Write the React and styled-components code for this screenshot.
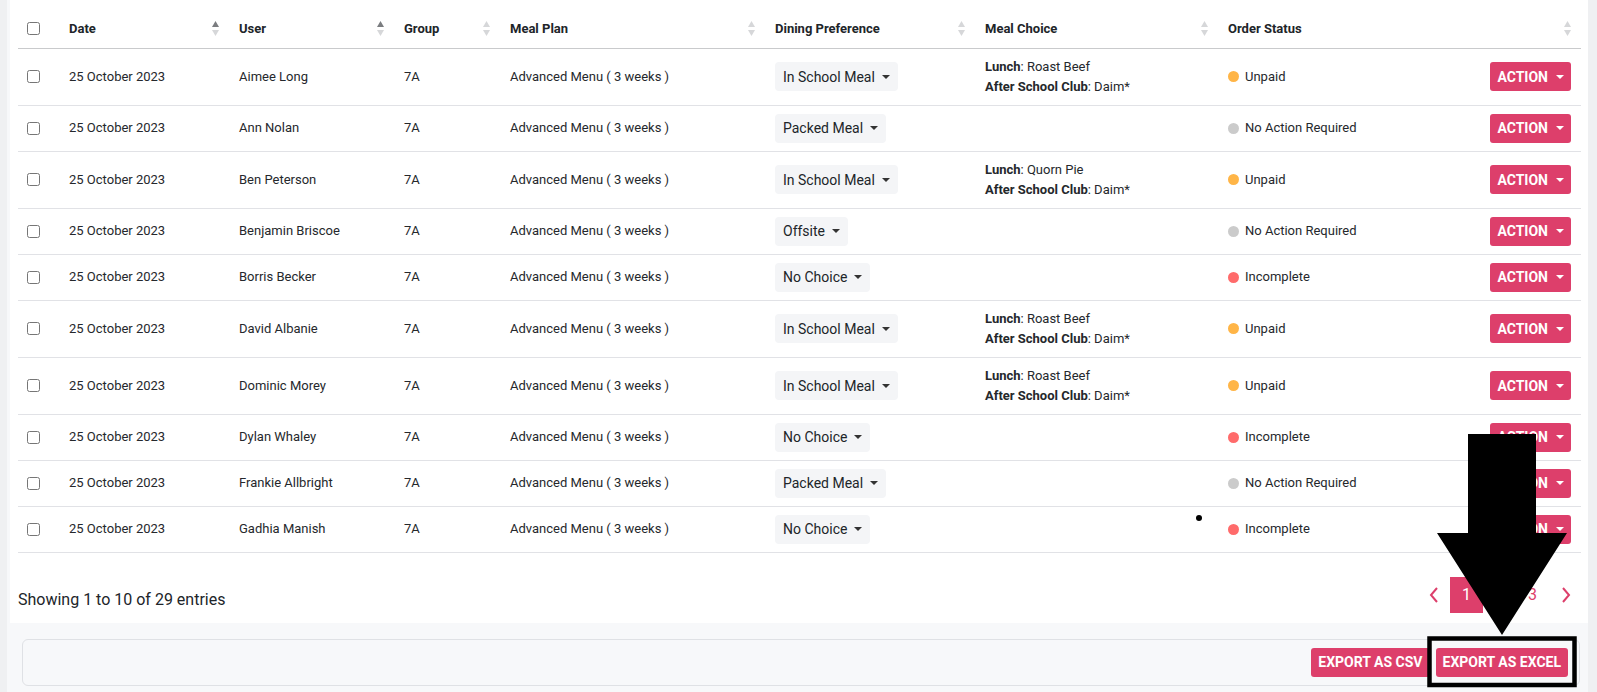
import React from "react";
import styled, { createGlobalStyle } from "styled-components";

const PINK = "#dd3f6b";

const Global = createGlobalStyle`
  html, body { margin: 0; padding: 0; }
  body {
    background: #f7f8fa;
    font-family: Roboto, "Liberation Sans", Arial, sans-serif;
    color: #212529;
  }
  * { box-sizing: border-box; }
`;

const Page = styled.div`
  position: relative;
  display: flex;
  width: 1597px;
  min-height: 692px;
  overflow: hidden;
`;

const Rail = styled.div`
  flex: 0 0 ${(p) => p.$w}px;
  background: #eff0f2;
`;

const Content = styled.div`
  flex: 1;
  background: #f7f8fa;
  padding-left: 3px;
  display: flex;
  flex-direction: column;
`;

const Card = styled.div`
  background: #fff;
  padding: 10px 7px 10px 8px;
`;

const Table = styled.table`
  width: 100%;
  border-collapse: collapse;
  table-layout: fixed;
  font-size: 13px;
`;

const Th = styled.th`
  text-align: left;
  font-weight: 700;
  font-size: 13px;
  color: #212529;
  padding: 0 10px 0 ${(p) => (p.$first ? 9 : 10)}px;
  height: 38px;
  border-bottom: 1px solid #c9cacc;
  vertical-align: middle;
`;

const ThInner = styled.div`
  display: flex;
  align-items: center;
  justify-content: space-between;
`;

const Td = styled.td`
  padding: 8px 10px 8px ${(p) => (p.$first ? 9 : 10)}px;
  border-bottom: 1px solid #e1e2e6;
  vertical-align: middle;
  color: #25282c;
  text-align: ${(p) => (p.$right ? "right" : "left")};
  line-height: 20px;
`;

const Check = styled.input.attrs({ type: "checkbox" })`
  appearance: none;
  -webkit-appearance: none;
  width: 13px;
  height: 13px;
  margin: 0;
  border: 1px solid #767676;
  border-radius: 2.5px;
  background: #fff;
  display: block;
`;

const Select = styled.button`
  display: inline-flex;
  align-items: center;
  gap: 7px;
  height: 29px;
  padding: 0 8px 0 8px;
  border: none;
  border-radius: 4px;
  background: #f4f5f7;
  font-family: inherit;
  font-size: 14px;
  color: #212529;
`;

const Caret = styled.span`
  width: 0;
  height: 0;
  border-left: 4px solid transparent;
  border-right: 4px solid transparent;
  border-top: 4px solid ${(p) => p.$color || "#333"};
  display: inline-block;
`;

const MealLine = styled.div`
  font-size: 13px;
  line-height: 20px;
  white-space: nowrap;
  b { font-weight: 700; }
`;

const Status = styled.div`
  display: flex;
  align-items: center;
  gap: 6px;
  font-size: 13px;
  white-space: nowrap;
`;

const Dot = styled.span`
  width: 11px;
  height: 11px;
  border-radius: 50%;
  background: ${(p) => p.$color};
  flex: 0 0 11px;
`;

const PinkButton = styled.button`
  display: inline-flex;
  align-items: center;
  gap: 8px;
  height: 29px;
  padding: 0 ${(p) => (p.$caret ? 7 : 7)}px 0 ${(p) => (p.$caret ? 7 : 7)}px;
  border: none;
  border-radius: 3px;
  background: ${PINK};
  color: #fff;
  font-family: inherit;
  font-weight: 700;
  font-size: 14px;
  text-transform: uppercase;
  letter-spacing: 0;
`;

const Bottom = styled.div`
  display: flex;
  align-items: center;
  justify-content: space-between;
  margin-top: 24px;
`;

const Info = styled.div`
  font-size: 16px;
  color: #212529;
  margin-top: 10px;
`;

const Pager = styled.div`
  display: flex;
  align-items: center;
  margin-right: -1px;
`;

const PageItem = styled.div`
  width: 33px;
  height: 36px;
  display: flex;
  align-items: center;
  justify-content: center;
  font-size: 16px;
  color: ${(p) => (p.$active ? "#fff" : PINK)};
  background: ${(p) => (p.$active ? PINK : "transparent")};
`;

const Footer = styled.div`
  margin: 16px 8px 0 12px;
  height: 47px;
  border: 1px solid #dfe1e5;
  border-radius: 6px;
  background: #f7f8fa;
  display: flex;
  align-items: center;
  justify-content: flex-end;
  gap: 6px;
  padding-right: 11px;
`;

const Overlay = styled.svg`
  position: absolute;
  left: 0;
  top: 0;
  pointer-events: none;
`;

const SortIcon = ({ active }) => (
  <svg width="7" height="15" viewBox="0 0 7 15">
    <polygon points="0,6 3.5,0 7,6" fill={active ? "#7b7d80" : "#d6d7d9"} />
    <polygon points="0,9 3.5,15 7,9" fill="#d6d7d9" />
  </svg>
);

const Chevron = ({ dir }) => (
  <svg width="10" height="16" viewBox="0 0 10 16">
    <polyline
      points={dir === "left" ? "8,1 2,8 8,15" : "2,1 8,8 2,15"}
      fill="none"
      stroke={PINK}
      strokeWidth="2"
    />
  </svg>
);

const STATUS = {
  Unpaid: "#ffb547",
  "No Action Required": "#cbcbcb",
  Incomplete: "#ff6b6b",
};

const rows = [
  ["Aimee Long", "In School Meal", "Roast Beef", "Unpaid"],
  ["Ann Nolan", "Packed Meal", null, "No Action Required"],
  ["Ben Peterson", "In School Meal", "Quorn Pie", "Unpaid"],
  ["Benjamin Briscoe", "Offsite", null, "No Action Required"],
  ["Borris Becker", "No Choice", null, "Incomplete"],
  ["David Albanie", "In School Meal", "Roast Beef", "Unpaid"],
  ["Dominic Morey", "In School Meal", "Roast Beef", "Unpaid"],
  ["Dylan Whaley", "No Choice", null, "Incomplete"],
  ["Frankie Allbright", "Packed Meal", null, "No Action Required"],
  ["Gadhia Manish", "No Choice", null, "Incomplete"],
];

const cols = [41, 170, 165, 106, 265, 210, 243, 232, 131];

const headers = [
  ["Date", true, true],
  ["User", true, true],
  ["Group", true, false],
  ["Meal Plan", true, false],
  ["Dining Preference", true, false],
  ["Meal Choice", true, false],
  ["Order Status", false, false],
  ["", true, false],
];

export default function App() {
  return (
    <>
      <Global />
      <Page>
        <Rail $w={7} />
        <Content>
          <Card>
            <Table>
              <colgroup>
                {cols.map((w, i) => (
                  <col key={i} style={{ width: w }} />
                ))}
              </colgroup>
              <thead>
                <tr>
                  <Th $first>
                    <Check />
                  </Th>
                  {headers.map(([label, sort, active], i) => (
                    <Th key={i}>
                      <ThInner>
                        <span>{label}</span>
                        {sort && <SortIcon active={active} />}
                      </ThInner>
                    </Th>
                  ))}
                </tr>
              </thead>
              <tbody>
                {rows.map(([name, pref, lunch, status]) => (
                  <tr key={name}>
                    <Td $first>
                      <Check />
                    </Td>
                    <Td>25 October 2023</Td>
                    <Td>{name}</Td>
                    <Td>7A</Td>
                    <Td>Advanced Menu ( 3 weeks )</Td>
                    <Td>
                      <Select>
                        {pref}
                        <Caret />
                      </Select>
                    </Td>
                    <Td>
                      {lunch && (
                        <>
                          <MealLine>
                            <b>Lunch</b>: {lunch}
                          </MealLine>
                          <MealLine>
                            <b>After School Club</b>: Daim*
                          </MealLine>
                        </>
                      )}
                    </Td>
                    <Td>
                      <Status>
                        <Dot $color={STATUS[status]} />
                        {status}
                      </Status>
                    </Td>
                    <Td $right>
                      <PinkButton $caret>
                        Action
                        <Caret $color="#fff" />
                      </PinkButton>
                    </Td>
                  </tr>
                ))}
              </tbody>
            </Table>
            <Bottom>
              <Info>Showing 1 to 10 of 29 entries</Info>
              <Pager>
                <PageItem>
                  <Chevron dir="left" />
                </PageItem>
                <PageItem $active>1</PageItem>
                <PageItem>2</PageItem>
                <PageItem>3</PageItem>
                <PageItem>
                  <Chevron dir="right" />
                </PageItem>
              </Pager>
            </Bottom>
          </Card>
          <Footer>
            <PinkButton>Export as CSV</PinkButton>
            <PinkButton>Export as Excel</PinkButton>
          </Footer>
        </Content>
        <Rail $w={9} />
        <Overlay width="1597" height="692" viewBox="0 0 1597 692">
          <polygon
            points="1468,434 1536,434 1536,533 1567,533 1502,635 1437,533 1468,533"
            fill="#000"
          />
          <rect
            x="1429.5"
            y="638.5"
            width="145"
            height="46.5"
            fill="none"
            stroke="#000"
            strokeWidth="4.5"
          />
          <circle cx="1199" cy="518" r="3" fill="#000" />
        </Overlay>
      </Page>
    </>
  );
}
